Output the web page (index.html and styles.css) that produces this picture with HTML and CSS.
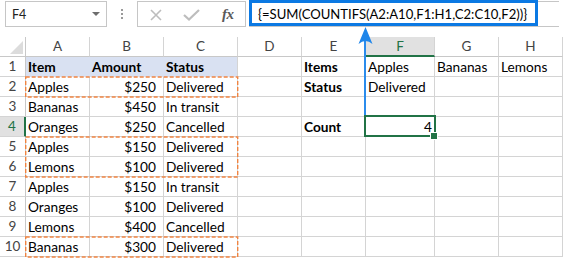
FILE: index.html
```html
<!DOCTYPE html>
<html>
<head>
<meta charset="utf-8">
<link rel="stylesheet" href="styles.css">
</head>
<body>
<div class="page">
  <div class="topbar">
    <div class="namebox"><span class="nb-text">F4</span><span class="caret"></span></div>
    <div class="dots"><i></i><i></i><i></i></div>
    <div class="buttons">
      <svg class="ic-x" width="12" height="12" viewBox="0 0 12 12"><path d="M1 1 L11 11 M11 1 L1 11" stroke="#bdbdbd" stroke-width="1.6" fill="none"/></svg>
      <svg class="ic-check" width="17" height="12" viewBox="0 0 17 12"><path d="M1 6 L6 10.5 L16 1" stroke="#bdbdbd" stroke-width="2.2" fill="none"/></svg>
      <span class="fx">fx</span>
    </div>
    <div class="formula">{=SUM(COUNTIFS(A2:A10,F1:H1,C2:C10,F2))}</div>
  </div>
  <div class="grid">
    <div class="hd corner"><span class="tri"></span></div>
    <div class="hd">A</div><div class="hd">B</div><div class="hd">C</div><div class="hd">D</div><div class="hd">E</div><div class="hd sel-col">F</div><div class="hd">G</div><div class="hd">H</div>

    <div class="rh">1</div><div class="c fill b">Item</div><div class="c fill b">Amount</div><div class="c fill fill-end b">Status</div><div class="c"></div><div class="c b">Items</div><div class="c">Apples</div><div class="c">Bananas</div><div class="c">Lemons</div>
    <div class="rh">2</div><div class="c">Apples</div><div class="c num">$250</div><div class="c">Delivered</div><div class="c"></div><div class="c b">Status</div><div class="c">Delivered</div><div class="c"></div><div class="c"></div>
    <div class="rh">3</div><div class="c">Bananas</div><div class="c num">$450</div><div class="c">In transit</div><div class="c"></div><div class="c"></div><div class="c"></div><div class="c"></div><div class="c"></div>
    <div class="rh sel-row">4</div><div class="c">Oranges</div><div class="c num">$250</div><div class="c">Cancelled</div><div class="c"></div><div class="c b">Count</div><div class="c val">4</div><div class="c"></div><div class="c"></div>
    <div class="rh">5</div><div class="c">Apples</div><div class="c num">$150</div><div class="c">Delivered</div><div class="c"></div><div class="c"></div><div class="c"></div><div class="c"></div><div class="c"></div>
    <div class="rh">6</div><div class="c">Lemons</div><div class="c num">$100</div><div class="c">Delivered</div><div class="c"></div><div class="c"></div><div class="c"></div><div class="c"></div><div class="c"></div>
    <div class="rh">7</div><div class="c">Apples</div><div class="c num">$150</div><div class="c">In transit</div><div class="c"></div><div class="c"></div><div class="c"></div><div class="c"></div><div class="c"></div>
    <div class="rh">8</div><div class="c">Oranges</div><div class="c num">$100</div><div class="c">Delivered</div><div class="c"></div><div class="c"></div><div class="c"></div><div class="c"></div><div class="c"></div>
    <div class="rh">9</div><div class="c">Lemons</div><div class="c num">$400</div><div class="c">Cancelled</div><div class="c"></div><div class="c"></div><div class="c"></div><div class="c"></div><div class="c"></div>
    <div class="rh">10</div><div class="c">Bananas</div><div class="c num">$300</div><div class="c">Delivered</div><div class="c"></div><div class="c"></div><div class="c"></div><div class="c"></div><div class="c"></div>
  </div>
  <svg class="overlay" width="563" height="258" viewBox="0 0 563 258">
    <g fill="none" stroke="#F08441" stroke-width="1.4" stroke-dasharray="4 2">
      <rect x="25.7" y="77" width="212" height="20"/>
      <rect x="25.7" y="137" width="212" height="40"/>
      <rect x="25.7" y="237" width="212" height="20"/>
    </g>
    <rect x="365" y="116" width="70" height="20" fill="none" stroke="#217346" stroke-width="2"/>
    <rect x="430" y="132" width="8" height="8" fill="#ffffff"/>
    <rect x="431" y="133" width="6" height="6" fill="#217346"/>
    <rect x="250.5" y="1.5" width="286" height="23" fill="none" stroke="#0b79e3" stroke-width="3"/>
    <line x1="365" y1="36" x2="365" y2="115" stroke="#2b8cec" stroke-width="2"/>
    <path d="M365.5 27 L358.5 44 Q365.5 38 372.5 44 Z" fill="#1f86ea"/>
  </svg>
</div>
</body>
</html>
```
FILE: styles.css
```css
html, body {
  margin: 0;
  padding: 0;
  background: #ffffff;
}
.page {
  position: relative;
  width: 563px;
  height: 258px;
  overflow: hidden;
  font-family: Lato, "Liberation Sans", sans-serif;
  color: #000;
}
.topbar {
  height: 37px;
  display: flex;
  align-items: flex-start;
}
.namebox {
  box-sizing: border-box;
  margin: 1px 0 0 5px;
  width: 102px;
  height: 26px;
  border: 1px solid #c6c6c6;
  display: flex;
  align-items: center;
  padding-left: 6px;
}
.nb-text {
  font-size: 12.5px;
  color: #222;
}
.caret {
  margin-left: auto;
  margin-right: 6px;
  width: 0;
  height: 0;
  border-left: 4px solid transparent;
  border-right: 4px solid transparent;
  border-top: 4px solid #6d6d6d;
}
.dots {
  margin: 9px 0 0 14px;
  width: 2px;
  display: flex;
  flex-direction: column;
  gap: 2px;
}
.dots i {
  display: block;
  width: 2px;
  height: 2px;
  background: #9a9a9a;
}
.buttons {
  box-sizing: border-box;
  margin: 1px 0 0 14px;
  width: 109px;
  height: 26px;
  border: 1px solid #c6c6c6;
  display: flex;
  align-items: center;
  padding-left: 12px;
}
.ic-x { margin-top: 1px; }
.ic-check { margin-left: 21px; margin-top: 1px; }
.fx {
  margin-left: 22px;
  font-family: "Liberation Serif", serif;
  font-style: italic;
  font-weight: bold;
  font-size: 15px;
  color: #5a5a5a;
  letter-spacing: -0.5px;
}
.formula {
  box-sizing: border-box;
  margin: 1px 0 0 3px;
  width: 310px;
  height: 26px;
  border-top: 1px solid #c6c6c6;
  border-bottom: 1px solid #c6c6c6;
  border-left: 1px solid #c6c6c6;
  padding-left: 8px;
  font-size: 13.1px;
  line-height: 24px;
  white-space: nowrap;
}
.grid {
  display: grid;
  grid-template-columns: 26px 64px 74px 74px 64px 64px 69px 64px 64px;
  grid-auto-rows: 20px;
}
.grid > div {
  box-sizing: border-box;
  border-right: 1px solid #d4d4d4;
  border-bottom: 1px solid #d4d4d4;
  white-space: nowrap;
  line-height: 19px;
}
.hd {
  font-size: 13.5px;
  color: #444;
  text-align: center;
  border-bottom-color: #c8c8c8 !important;
}
.corner {
  position: relative;
  border-right-color: #c8c8c8 !important;
}
.tri {
  position: absolute;
  right: 2px;
  bottom: 2px;
  width: 0;
  height: 0;
  border-left: 13px solid transparent;
  border-bottom: 13px solid #dcdcdc;
}
.sel-col {
  background: #e1e1e1;
  color: #217346;
  border-bottom: 2px solid #217346 !important;
}
.rh {
  font-size: 13.5px;
  color: #444;
  text-align: center;
  border-right-color: #c8c8c8 !important;
}
.sel-row {
  background: #e1e1e1;
  color: #217346;
  border-right: 2px solid #217346 !important;
}
.c {
  font-size: 13.7px;
  padding-left: 2px;
}
.b { font-weight: bold; }
.fill {
  background: #d9e1f2;
  border-right-color: #d9e1f2 !important;
  border-bottom-color: #d9e1f2 !important;
}
.fill-end {
  border-right-color: #d4d4d4 !important;
}
.num {
  text-align: right;
  padding-right: 7px;
}
.val {
  text-align: right;
  padding-right: 2px;
}
.overlay {
  position: absolute;
  left: 0;
  top: 0;
  pointer-events: none;
}
```
